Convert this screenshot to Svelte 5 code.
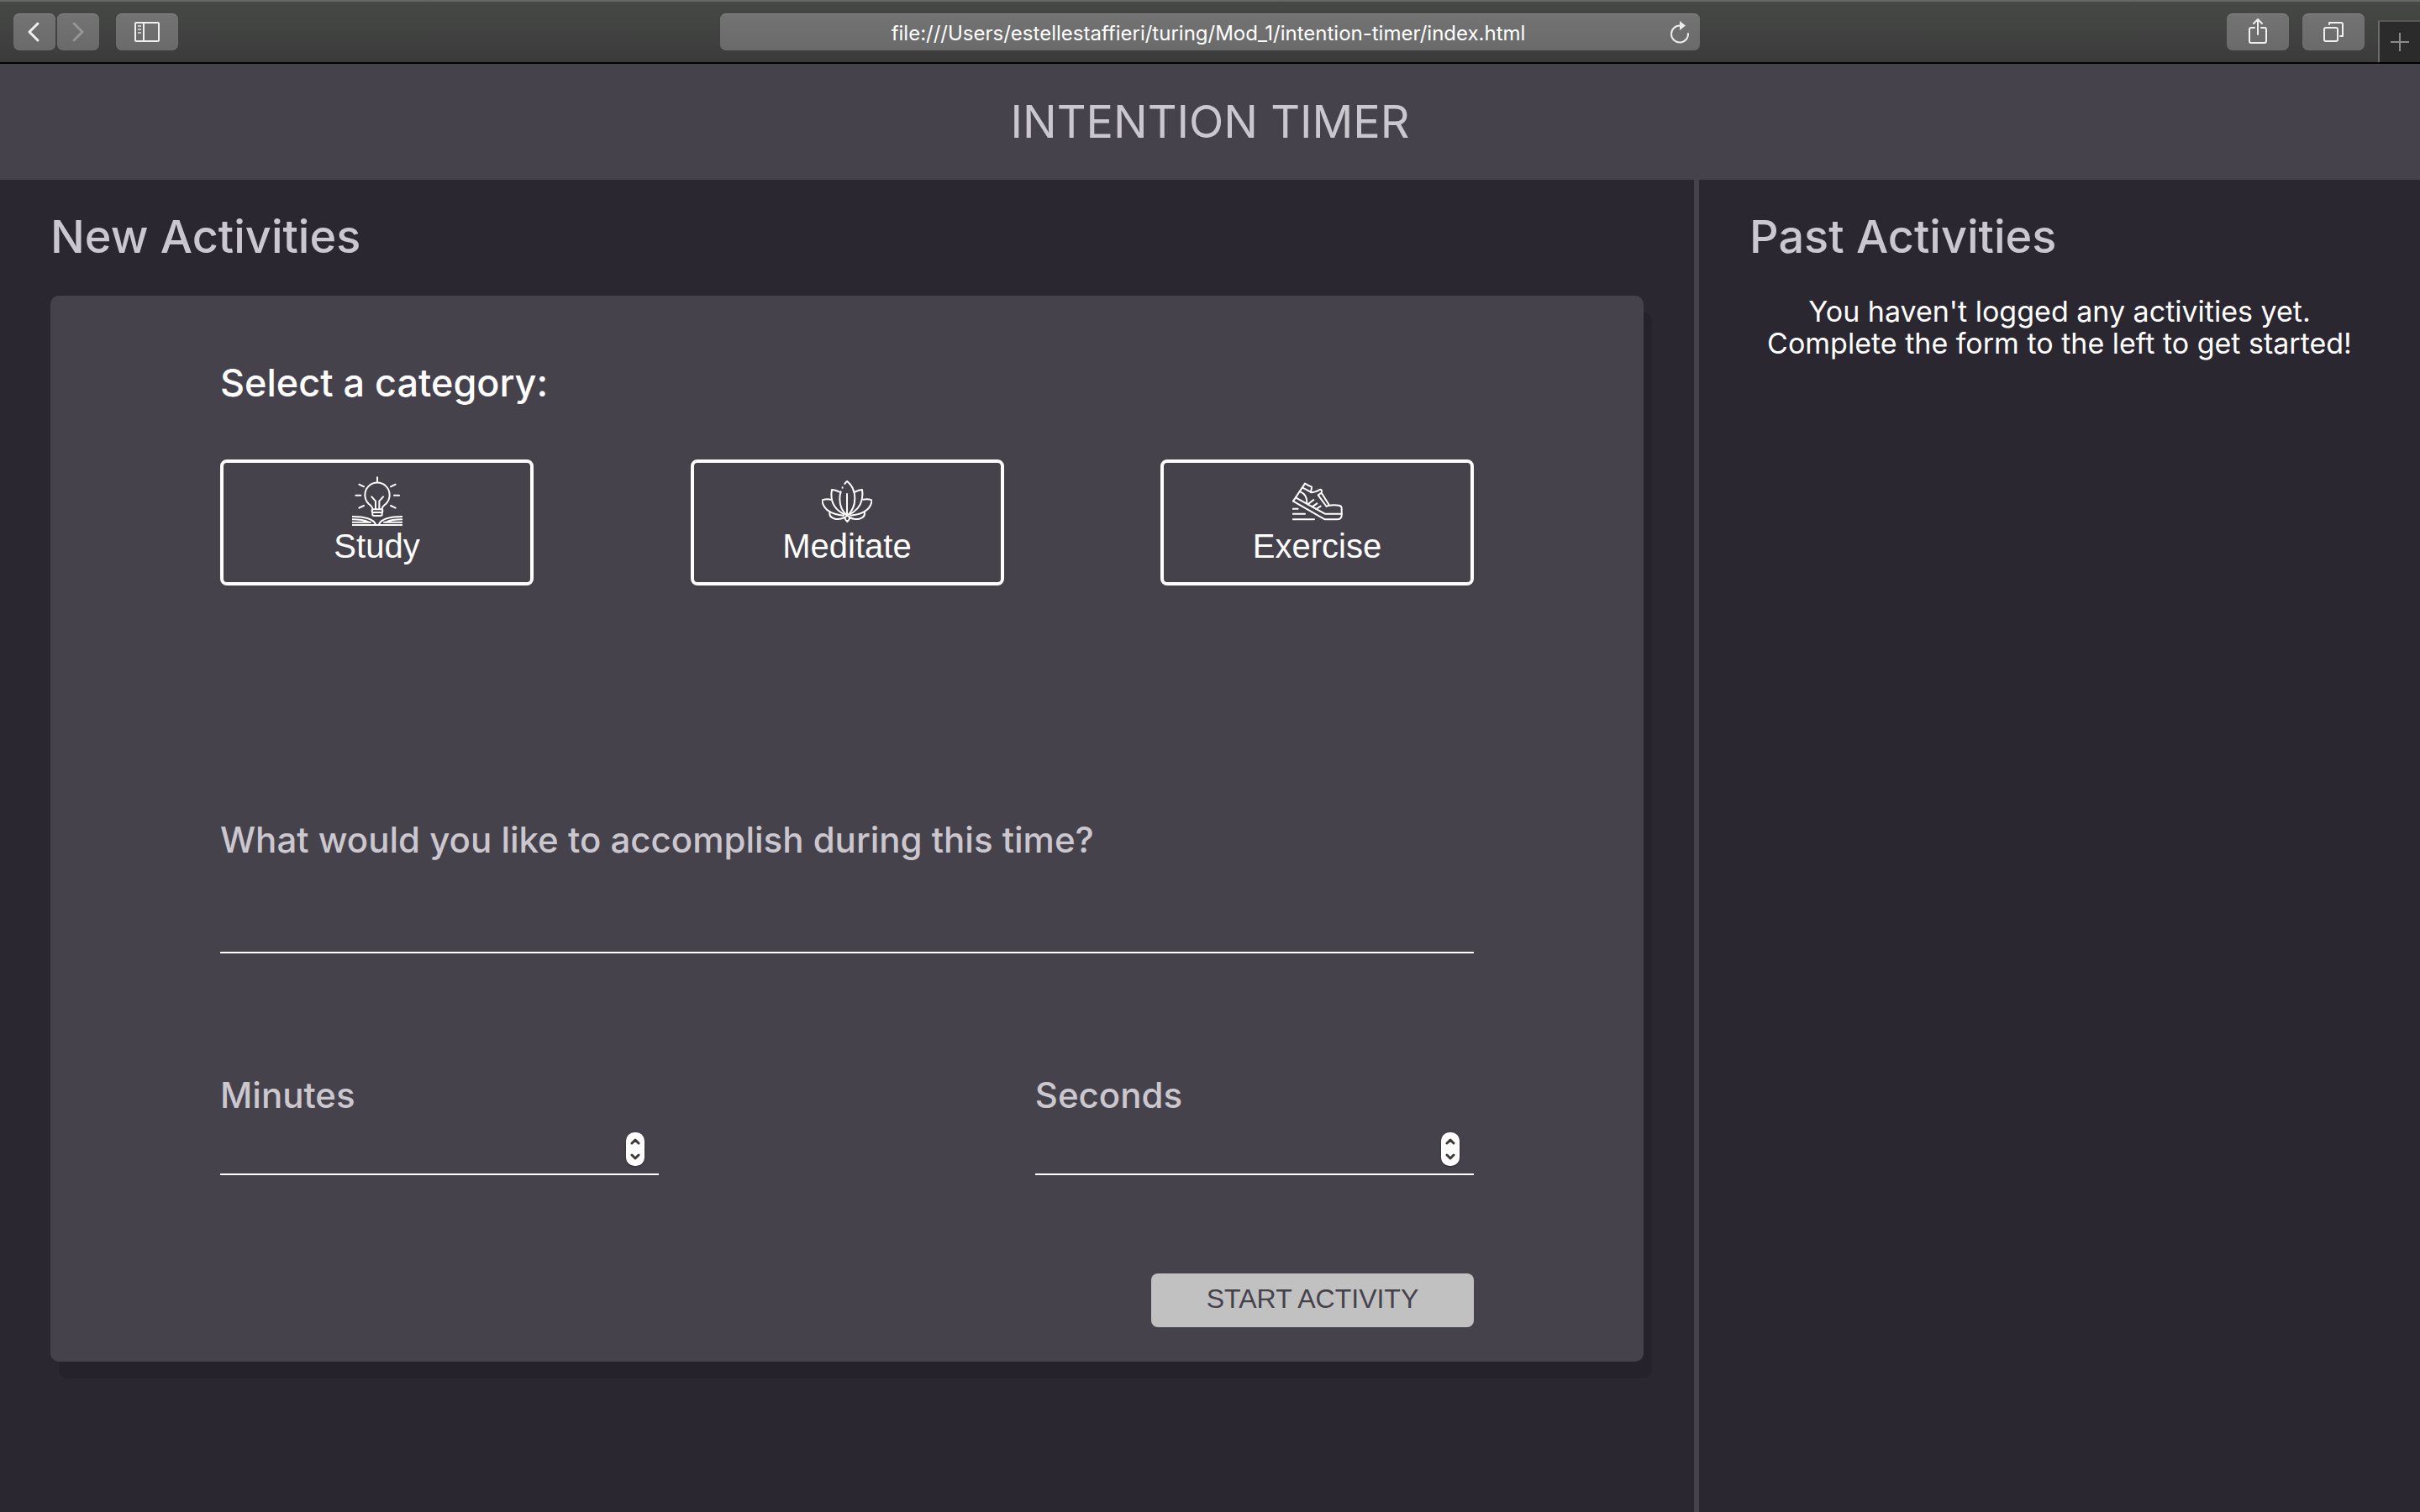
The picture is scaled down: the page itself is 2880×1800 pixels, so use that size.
<script>
  let category = $state('');
  let goal = $state('');
  let minutes = $state(null);
  let seconds = $state(null);
  let address = $state('file:///Users/estellestaffieri/turing/Mod_1/intention-timer/index.html');

  const categories = ['Study', 'Meditate', 'Exercise'];

  const step = (value, by) => Math.max(0, (value ?? 0) + by);
</script>

{#snippet stepper(label, change)}
  <span class="stepper">
    <button type="button" aria-label="Increase {label}" onclick={() => change(1)}>
      <svg viewBox="0 0 12 8"><path d="M2 6 6 2l4 4" /></svg>
    </button>
    <button type="button" aria-label="Decrease {label}" onclick={() => change(-1)}>
      <svg viewBox="0 0 12 8"><path d="m2 2 4 4 4-4" /></svg>
    </button>
  </span>
{/snippet}

<div class="window">
  <div class="toolbar">
    <div class="group start">
      <div class="pair">
        <button class="tool narrow" type="button" aria-label="Back">
          <svg viewBox="0 0 50 44"><path d="M29 12 19 22l10 10" stroke-width="3" /></svg>
        </button>
        <button class="tool narrow dim" type="button" aria-label="Forward">
          <svg viewBox="0 0 50 44"><path d="m20 12 10 10-10 10" stroke-width="3" /></svg>
        </button>
      </div>
      <button class="tool" type="button" aria-label="Show sidebar">
        <svg viewBox="0 0 74 44">
          <rect x="23" y="11" width="28" height="22" rx="1" />
          <path d="M33 11v22" />
          <path d="M26 15h4M26 19h4M26 23h4" stroke-linecap="butt" opacity="0.7" />
        </svg>
      </button>
    </div>
    <div class="address">
      <input type="text" aria-label="Address" bind:value={address} />
      <button class="reload" type="button" aria-label="Reload">
        <svg viewBox="0 0 28 28">
          <path d="M14 5.500a10 10 0 1 0 10 9.500" />
          <path class="solid" d="M14 0v11l7-5.500z" />
        </svg>
      </button>
    </div>
    <div class="group end">
      <button class="tool" type="button" aria-label="Share">
        <svg viewBox="0 0 74 44">
          <path d="M33 17h-4a2 2 0 0 0-2 2v14a2 2 0 0 0 2 2h16a2 2 0 0 0 2-2V19a2 2 0 0 0-2-2h-4" />
          <path d="M37 25V7M32 12l5-5 5 5" />
        </svg>
      </button>
      <button class="tool" type="button" aria-label="Show all tabs">
        <svg viewBox="0 0 74 44">
          <rect x="26" y="17" width="16" height="16" rx="2" />
          <path d="M32 13v-2h14a2 2 0 0 1 2 2v14h-3" />
        </svg>
      </button>
      <button class="new-tab" type="button" aria-label="New tab">
        <svg viewBox="0 0 24 24"><path d="M12 1v22M1 12h22" /></svg>
      </button>
    </div>
  </div>

  <header><h1>INTENTION TIMER</h1></header>

  <main>
    <section class="new">
      <h2>New Activities</h2>
      <form onsubmit={(e) => e.preventDefault()}>
        <h3>Select a category:</h3>
        <div class="categories">
          {#each categories as name}
            <button
              type="button"
              class="category"
              aria-pressed={category === name}
              onclick={() => (category = name)}
            >
              {#if name === 'Study'}
                <svg viewBox="57 24 180 180" aria-hidden="true">
                  <path d="M147 28v14M70 92h18M207 92h18M82 53l17 8M212 53l-17 8M82 137l17-8M212 137l-17-8" />
                  <path d="M130 141c0-9-6-12-14-19a44 44 0 1 1 62 0c-8 7-14 10-14 19" />
                  <path d="M127 97l14 16v27M168 97l-14 16v27" />
                  <rect x="128" y="142" width="38" height="11" rx="5" />
                  <path d="M130 153v7q0 5 5 5h24q5 0 5-5v-7" />
                  <path d="M57 198h180M57 168c36 0 76 6 84 28M237 168c-36 0-76 6-84 28M57 178c24 0 44 2 58 9M57 188h66M237 178c-24 0-44 2-58 9M237 188h-66" />
                </svg>
              {:else if name === 'Meditate'}
                <svg viewBox="54 24 180 180" aria-hidden="true">
                  <path d="M136 51c4-6 8-9 9-9 14 12 27 34 27 61 0 26-9 46-27 62-17-14-27-36-27-60 0-10 1-18 4-26" />
                  <path d="M144 87v74M128 64v1" />
                  <path d="M117 80c-9-5-18-8-27-8-6 34 4 68 44 88M172 80c9-5 17-8 26-8 5 34-5 68-45 88" />
                  <path d="M86 107c-11-2-21-1-31 2 3 30 26 50 77 55M202 107c11-2 21-1 31 2-3 30-26 50-77 55" />
                  <path d="M82 154c-2 22 30 29 53 17M207 154c2 22-30 29-54 17" />
                  <path d="M145 163l9 9c-1 7-4 10-9 14-5-4-8-7-9-14z" />
                </svg>
              {:else}
                <svg viewBox="52 24 180 180" aria-hidden="true">
                  <path d="M55 113l42-63c8 5 16 9 24 12 1 8-5 16-2 20 9 0 24-6 33-11 4 0 5 3 5 8" />
                  <path d="M181 129c12-3 28-3 41 0 4 2 6 5 6 9v25c0 10-6 15-16 15h-44L55 113" />
                  <path d="M64 100l104 58h60M89 65l28 15M80 79c16 6 25 20 24 42" />
                  <path d="M144 91l12-8 27 43-9 6z" />
                  <path d="M108 124l20-16M123 133l17-12M137 141l16-10" />
                  <path d="M52 140h20M52 158h45M52 178h78" />
                </svg>
              {/if}
              <span>{name}</span>
            </button>
          {/each}
        </div>

        <label class="goal">
          <span>What would you like to accomplish during this time?</span>
          <input type="text" bind:value={goal} />
        </label>

        <div class="times">
          <div class="time">
            <label for="minutes">Minutes</label>
            <div class="number">
              <input id="minutes" type="number" min="0" bind:value={minutes} />
              {@render stepper('minutes', (by) => (minutes = step(minutes, by)))}
            </div>
          </div>
          <div class="time">
            <label for="seconds">Seconds</label>
            <div class="number">
              <input id="seconds" type="number" min="0" bind:value={seconds} />
              {@render stepper('seconds', (by) => (seconds = step(seconds, by)))}
            </div>
          </div>
        </div>

        <button class="submit" type="submit">START ACTIVITY</button>
      </form>
    </section>

    <aside>
      <h2>Past Activities</h2>
      <p>You haven't logged any activities yet. <br />Complete the form to the left to get started!</p>
    </aside>
  </main>
</div>

<style>
  :global(body) {
    margin: 0;
    background: #2b2731;
  }

  * {
    box-sizing: border-box;
  }

  .window {
    display: flex;
    flex-direction: column;
    min-height: 100vh;
    color: #fff;
    font-family: Inter, 'Liberation Sans', sans-serif;
  }

  button,
  input {
    margin: 0;
    padding: 0;
    border: 0;
    background: none;
    color: inherit;
    font: inherit;
  }

  svg {
    display: block;
    fill: none;
    stroke: currentColor;
    stroke-linecap: round;
    stroke-linejoin: round;
  }

  h1,
  h2,
  h3,
  p {
    margin: 0;
    font-weight: 500;
  }

  /* Browser toolbar */
  .toolbar {
    display: grid;
    grid-template-columns: 1fr 40.5% 1fr;
    align-items: center;
    height: 76px;
    border-top: 2px solid #666867;
    border-bottom: 2px solid #000;
    background: linear-gradient(#474947, #3a3b3a);
  }

  .group {
    display: flex;
    align-items: center;
  }

  .start {
    gap: 20px;
    padding-left: 16px;
  }

  .end {
    justify-content: flex-end;
    gap: 16px;
    height: 100%;
  }

  .pair {
    display: flex;
    gap: 2px;
  }

  .tool {
    width: 74px;
    height: 44px;
    border-top: 1px solid #8a8a8a;
    border-radius: 7px;
    background: linear-gradient(#737373, #6a6a6a);
    color: #f0f0f0;
    stroke-width: 2px;
  }

  .tool svg {
    width: 100%;
    height: 44px;
    margin-top: -1px;
  }

  .narrow {
    width: 50px;
  }

  .dim {
    color: #959595;
  }

  .address {
    display: flex;
    align-items: center;
    height: 44px;
    padding: 0 10px 0 34px;
    border-top: 1px solid #8a8a8a;
    border-radius: 7px;
    background: linear-gradient(#737373, #6a6a6a);
  }

  .address input {
    flex: 1;
    min-width: 0;
    padding-top: 2px;
    font-size: 24px;
    font-weight: 400;
    text-align: center;
  }

  .reload svg {
    width: 28px;
    height: 28px;
    color: #ececec;
    stroke-width: 2px;
  }

  .solid {
    fill: currentColor;
    stroke: none;
  }

  .new-tab {
    display: grid;
    place-items: center;
    align-self: flex-end;
    width: 50px;
    height: 50px;
    border-top: 2px solid #555756;
    border-left: 2px solid #6b6d6c;
    background: #2b2b2b;
    color: #8b8b8b;
  }

  .new-tab svg {
    width: 24px;
    height: 24px;
    stroke-width: 2px;
    stroke-linecap: butt;
  }

  /* Page */
  header {
    padding: 39px 60px;
    background: #46424c;
    color: #cbc7cf;
    text-align: center;
  }

  h1,
  h2 {
    font-size: 54px;
    line-height: 60px;
  }

  h1 {
    font-weight: 400;
  }

  main {
    display: grid;
    grid-template-columns: 70% 30%;
    flex: 1;
  }

  section,
  aside {
    padding: 38px 60px;
  }

  aside {
    border-left: 6px solid #46424c;
  }

  h2 {
    margin-bottom: 40px;
    color: #cbc7cf;
  }

  aside p {
    font-size: 34px;
    font-weight: 400;
    line-height: 38px;
    text-align: center;
  }

  form {
    display: flex;
    flex-direction: column;
    padding: 80px 202px 41px;
    border-radius: 10px;
    background: #46424c;
    box-shadow: 10px 20px #25222c;
  }

  h3 {
    font-size: 45px;
    line-height: 48px;
  }

  .categories {
    display: flex;
    justify-content: space-between;
    margin: 67px 0 279px;
  }

  .category {
    display: flex;
    flex-direction: column;
    align-items: center;
    justify-content: center;
    width: 25%;
    height: 150px;
    padding-bottom: 4px;
    border: 4px solid #fff;
    border-radius: 8px;
    font-family: 'Liberation Sans', sans-serif;
    font-size: 40px;
    line-height: 46px;
  }

  .category svg {
    width: 60px;
    height: 60px;
    stroke-width: 6px;
  }

  .goal {
    display: flex;
    flex-direction: column;
  }

  .goal span,
  .time label {
    color: #cbc7cf;
    font-size: 42px;
    font-weight: 500;
    line-height: 48px;
  }

  .goal input {
    height: 111px;
    border-bottom: 2px solid #fff;
    font-size: 42px;
  }

  .times {
    display: flex;
    justify-content: space-between;
    margin: 145px 0 117px;
  }

  .time {
    display: flex;
    flex-direction: column;
    width: 35%;
  }

  .number {
    display: flex;
    gap: 16px;
    align-items: flex-end;
    height: 71px;
    padding: 0 17px 9px 0;
    border-bottom: 2px solid #fff;
  }

  .number input {
    flex: 1;
    min-width: 0;
    height: 40px;
    font-size: 34px;
    appearance: textfield;
  }

  .number input::-webkit-inner-spin-button {
    display: none;
  }

  .stepper {
    display: flex;
    flex-direction: column;
    width: 22px;
    height: 40px;
    padding: 2px 0;
    border-radius: 10px;
    background: #fff;
    box-shadow: 0 1px 2px #2b2731;
    color: #3c3c3c;
  }

  .stepper button {
    display: grid;
    flex: 1;
    place-items: center;
  }

  .stepper svg {
    width: 12px;
    height: 8px;
    stroke-width: 3px;
  }

  .submit {
    align-self: flex-end;
    width: 384px;
    height: 64px;
    padding-bottom: 4px;
    border-radius: 8px;
    background: #c1c1c1;
    color: #46424c;
    font-family: 'Liberation Sans', sans-serif;
    font-size: 32px;
  }

  input:focus-visible,
  button:focus-visible {
    outline: 3px solid #8f8a99;
    outline-offset: 3px;
  }
</style>
